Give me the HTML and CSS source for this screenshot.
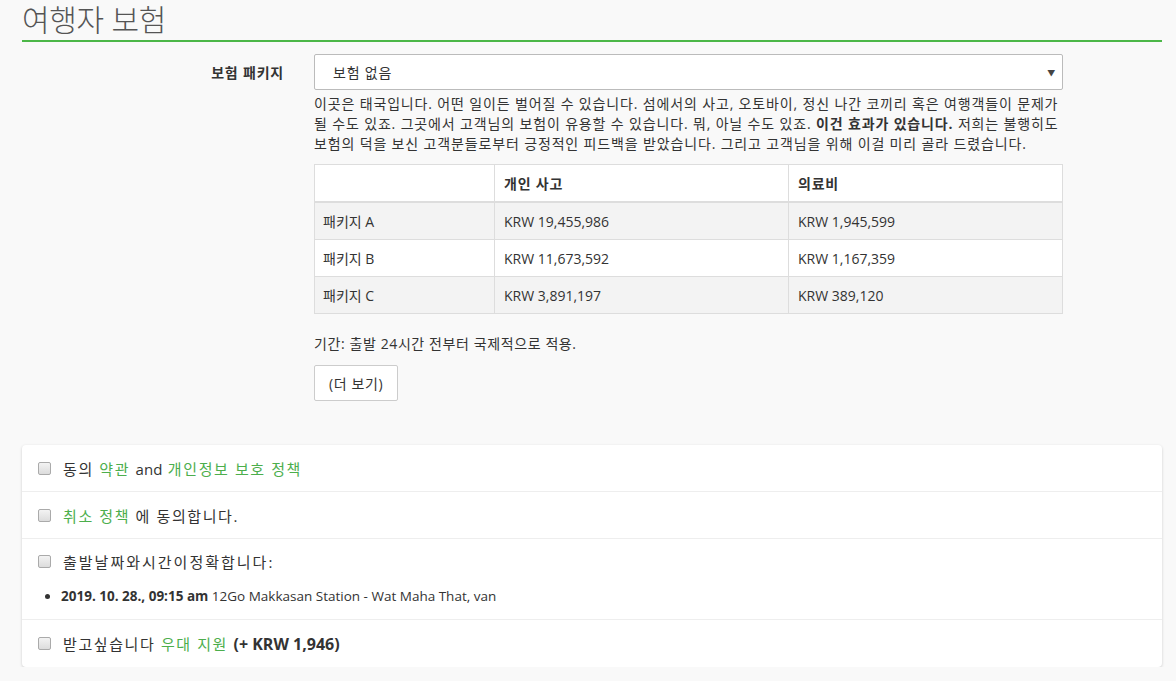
FILE: index.html
```html
<!DOCTYPE html>
<html lang="ko">
<head>
  <meta charset="UTF-8">
  <title>여행자 보험</title>
  <link rel="stylesheet" href="styles.css">
</head>
<body>

<div class="page">
  <h1 class="page-title">여행자 보험</h1>

  <div class="form-row">
    <label class="form-label">보험 패키지</label>
    <div class="form-field">
      <div class="select">
        <span>보험 없음</span>
        <span class="caret">▼</span>
      </div>
      <p class="help">이곳은 태국입니다. 어떤 일이든 벌어질 수 있습니다. 섬에서의 사고, 오토바이, 정신 나간 코끼리 혹은 여행객들이 문제가 될 수도 있죠. 그곳에서 고객님의 보험이 유용할 수 있습니다. 뭐, 아닐 수도 있죠. <b>이건 효과가 있습니다.</b> 저희는 불행히도 보험의 덕을 보신 고객분들로부터 긍정적인 피드백을 받았습니다. 그리고 고객님을 위해 이걸 미리 골라 드렸습니다.</p>

      <table class="packages">
        <thead>
          <tr><th></th><th>개인 사고</th><th>의료비</th></tr>
        </thead>
        <tbody>
          <tr><td>패키지 A</td><td>KRW 19,455,986</td><td>KRW 1,945,599</td></tr>
          <tr><td>패키지 B</td><td>KRW 11,673,592</td><td>KRW 1,167,359</td></tr>
          <tr><td>패키지 C</td><td>KRW 3,891,197</td><td>KRW 389,120</td></tr>
        </tbody>
      </table>

      <p class="period">기간: 출발 24시간 전부터 국제적으로 적용.</p>
      <button class="btn-more">(더 보기)</button>
    </div>
  </div>

  <div class="agree-card">
    <div class="agree-row">
      <span class="check"></span>
      <span class="ko">동의 <a href="#">약관</a> <span class="en">and</span> <a href="#">개인정보 보호 정책</a></span>
    </div>
    <div class="agree-row">
      <span class="check"></span>
      <span class="ko"><a href="#">취소 정책</a> 에 동의합니다.</span>
    </div>
    <div class="agree-row tall">
      <div class="agree-line">
        <span class="check"></span>
        <span class="ko wide">출발날짜와시간이정확합니다:</span>
      </div>
      <ul class="trip">
        <li><b>2019. 10. 28., 09:15 am</b> 12Go Makkasan Station - Wat Maha That, van</li>
      </ul>
    </div>
    <div class="agree-row">
      <span class="check"></span>
      <span class="ko">받고싶습니다 <a href="#">우대 지원</a> <b class="en price">(+ KRW 1,946)</b></span>
    </div>
  </div>
</div>

</body>
</html>
```

FILE: styles.css
```css
body {
  margin: 0;
  background: #f9f9f9;
  color: #333;
  font-family: "Open Sans", "Noto Sans CJK KR", sans-serif;
  font-size: 14px;
}

a {
  color: #4cae4c;
  text-decoration: none;
}

.page {
  padding: 0 14px 0 22px;
}

.page-title {
  margin: 0;
  padding: 0;
  font-size: 30px;
  font-weight: 300;
  line-height: 40px;
  letter-spacing: -0.3px;
  color: #555;
  border-bottom: 2px solid #4cb748;
}

.form-row {
  display: flex;
  margin-top: 12px;
}

.form-label {
  width: 262px;
  padding-top: 8px;
  text-align: right;
  font-weight: bold;
  font-size: 14px;
  letter-spacing: 0.8px;
}

.form-field {
  width: 749px;
  margin-left: 30px;
}

.select {
  display: flex;
  justify-content: space-between;
  align-items: center;
  height: 36px;
  padding: 0 6px 0 18px;
  background: #fff;
  border: 1px solid #bbb;
  border-radius: 2px;
  box-sizing: border-box;
  letter-spacing: 0.8px;
}

.caret {
  font-size: 8px;
  color: #444;
}

.help {
  margin: 4px 0 0;
  line-height: 20px;
  letter-spacing: 0.85px;
  word-break: keep-all;
}

.packages {
  width: 100%;
  margin-top: 10px;
  border-collapse: collapse;
  background: #fff;
}

.packages th,
.packages td {
  height: 36px;
  padding: 0 8px;
  text-align: left;
  border: 1px solid #ddd;
}

.packages th {
  border-bottom-width: 2px;
  font-weight: bold;
  letter-spacing: 0.8px;
}

.packages th:first-child { width: 163px; }
.packages th:nth-child(2) { width: 276px; }

.packages td:not(:first-child),
.packages th:not(:first-child) {
  padding-left: 9px;
}

.packages tbody tr:nth-child(odd) {
  background: #f3f3f3;
}

.period {
  margin: 20px 0 0;
  line-height: 20px;
  letter-spacing: 0.6px;
}

.btn-more {
  margin-top: 11px;
  height: 36px;
  padding: 0 14px;
  background: #fff;
  border: 1px solid #ccc;
  border-radius: 2px;
  font-family: inherit;
  font-size: 14px;
  letter-spacing: 0.6px;
  color: #333;
}

.agree-card {
  margin: 44px 0 0;
  background: #fff;
  border-radius: 4px;
  box-shadow: 0 1px 3px rgba(0,0,0,0.18);
}

.agree-row,
.agree-line {
  display: flex;
  align-items: center;
  gap: 12px;
  font-size: 15px;
}

.ko {
  letter-spacing: 1.6px;
}

.ko.wide {
  letter-spacing: 2px;
}

.en {
  letter-spacing: 0;
}

.price {
  font-size: 16px;
}

.agree-row {
  min-height: 46px;
  padding: 0 16px;
  border-top: 1px solid #eee;
}

.agree-row:first-child {
  border-top: none;
}

.agree-row:last-child {
  min-height: 47px;
}

.agree-row.tall {
  flex-direction: column;
  align-items: flex-start;
  gap: 0;
  padding-top: 12px;
  padding-bottom: 14px;
}

.check {
  width: 11px;
  height: 11px;
  border: 1px solid #aaa;
  border-radius: 2px;
  background: linear-gradient(#f3f3f3, #dcdcdc);
}

.trip {
  margin: 15px 0 0;
  padding-left: 23px;
  font-size: 13.5px;
}
```
